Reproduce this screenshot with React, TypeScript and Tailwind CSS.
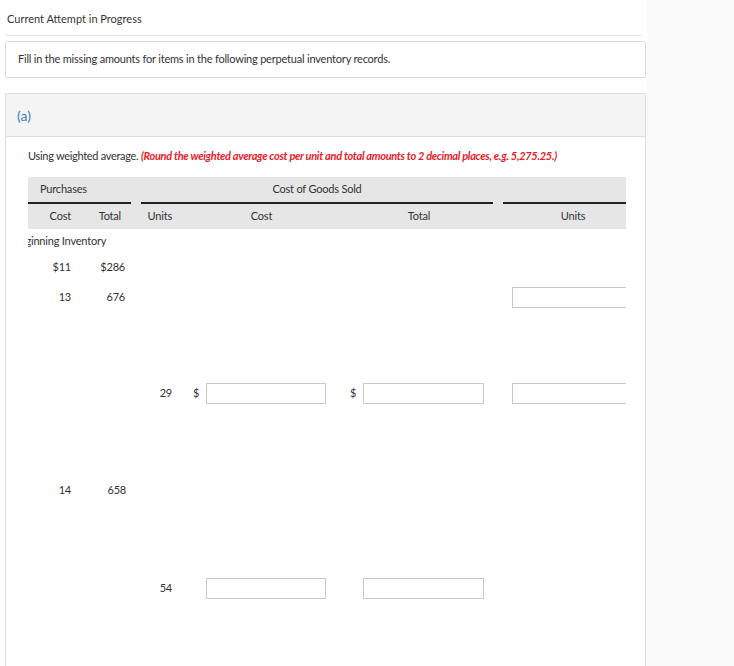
import React from "react";

const font = { fontFamily: "Lato, 'Liberation Sans', sans-serif" };

function Input({ w = "w-[120px]" }: { w?: string }) {
  return <div className={`${w} h-[21px] shrink-0 border border-[#c8c8c8] bg-white`} />;
}

export default function App() {
  return (
    <div className="w-[734px] h-[666px] overflow-hidden bg-[#f9f9f9] flex text-[#333]" style={font}>
      <div className="w-[647px] shrink-0 bg-white flex flex-col">
        <div className="h-[36px] shrink-0 mx-[5px] border-b border-[#e6e6e6] flex items-center text-[11px] pt-[4px] pl-[2px]">
          Current Attempt in Progress
        </div>
        <div className="mt-[5px] shrink-0 ml-[5px] mr-[1px] h-[37px] border border-[#dcdcdc] rounded-[2px] flex items-center pl-[12px] text-[11px] tracking-[-0.2px]">
          Fill in the missing amounts for items in the following perpetual inventory records.
        </div>
        <div className="mt-[15px] ml-[5px] mr-[1px] flex-1 border border-[#dcdcdc] border-b-0 rounded-t-[2px] flex flex-col">
          <div className="h-[43px] shrink-0 bg-[#f4f4f4] border-b border-[#dcdcdc] flex items-center pl-[11px] text-[14px] text-[#3a7fc1]">
            (a)
          </div>
          <div className="pl-[22px] pr-[20px] flex flex-col">
            <div className="h-[40px] shrink-0 flex items-center text-[11px] tracking-[-0.3px] pb-[1px] whitespace-nowrap">
              <span>Using weighted average.&nbsp;</span>
              <span className="text-[#e8202a] font-bold italic">
                (Round the weighted average cost per unit and total amounts to 2 decimal places, e.g. 5,275.25.)
              </span>
            </div>
            <div className="w-[598px] overflow-hidden text-[11px] tracking-[-0.2px]">
              {/* header row 1 */}
              <div className="h-[27px] bg-[#e6e6e6] flex">
                <div className="w-[103px] shrink-0 border-b-2 border-[#222] flex items-center pl-[12px]">Purchases</div>
                <div className="w-[10px] shrink-0" />
                <div className="w-[352px] shrink-0 border-b-2 border-[#222] flex items-center justify-center">Cost of Goods Sold</div>
                <div className="w-[10px] shrink-0" />
                <div className="w-[140px] shrink-0 border-b-2 border-[#222]" />
              </div>
              {/* header row 2 */}
              <div className="h-[25px] bg-[#e6e6e6] flex items-center">
                <div className="w-[49px] shrink-0 text-right pr-[6px]">Cost</div>
                <div className="w-[54px] shrink-0 text-right pr-[10px]">Total</div>
                <div className="w-[10px] shrink-0" />
                <div className="w-[37px] shrink-0 text-right pr-[6px]">Units</div>
                <div className="w-[157px] shrink-0 text-center pl-[10px]">Cost</div>
                <div className="w-[158px] shrink-0 text-center pl-[10px]">Total</div>
                <div className="w-[10px] shrink-0" />
                <div className="w-[140px] shrink-0 text-center">Units</div>
              </div>
              {/* Beginning inventory */}
              <div className="h-[24px] flex items-center">
                <span className="ml-[-15px] whitespace-nowrap">Beginning Inventory</span>
              </div>
              <div className="h-[28px] flex items-center">
                <div className="w-[49px] shrink-0 text-right pr-[6px]">$11</div>
                <div className="w-[54px] shrink-0 text-right pr-[6px]">$286</div>
              </div>
              <div className="h-[32px] flex items-center">
                <div className="w-[49px] shrink-0 text-right pr-[6px]">13</div>
                <div className="w-[54px] shrink-0 text-right pr-[6px]">676</div>
                <div className="w-[10px] shrink-0" />
                <div className="w-[37px] shrink-0" />
                <div className="w-[157px] shrink-0" />
                <div className="w-[158px] shrink-0" />
                <div className="w-[10px] shrink-0" />
                <div className="w-[140px] shrink-0 pl-[9px] flex">
                  <Input w="w-[125px]" />
                </div>
              </div>
              <div className="h-[160px] flex items-center">
                <div className="w-[49px] shrink-0" />
                <div className="w-[54px] shrink-0" />
                <div className="w-[10px] shrink-0" />
                <div className="w-[37px] shrink-0 text-right pr-[6px]">29</div>
                <div className="w-[157px] shrink-0 flex items-center pl-[15px] gap-[7px]">
                  <span>$</span>
                  <Input w="w-[120px]" />
                </div>
                <div className="w-[158px] shrink-0 flex items-center pl-[15px] gap-[7px]">
                  <span>$</span>
                  <Input w="w-[121px]" />
                </div>
                <div className="w-[10px] shrink-0" />
                <div className="w-[140px] shrink-0 pl-[9px] flex">
                  <Input w="w-[125px]" />
                </div>
              </div>
              <div className="h-[34px] flex items-center">
                <div className="w-[49px] shrink-0 text-right pr-[6px]">14</div>
                <div className="w-[54px] shrink-0 text-right pr-[5px]">658</div>
              </div>
              <div className="h-[162px] flex items-center">
                <div className="w-[49px] shrink-0" />
                <div className="w-[54px] shrink-0" />
                <div className="w-[10px] shrink-0" />
                <div className="w-[37px] shrink-0 text-right pr-[6px]">54</div>
                <div className="w-[157px] shrink-0 flex items-center pl-[28px]">
                  <Input w="w-[120px]" />
                </div>
                <div className="w-[158px] shrink-0 flex items-center pl-[28px]">
                  <Input w="w-[121px]" />
                </div>
              </div>
            </div>
          </div>
        </div>
      </div>
    </div>
  );
}
